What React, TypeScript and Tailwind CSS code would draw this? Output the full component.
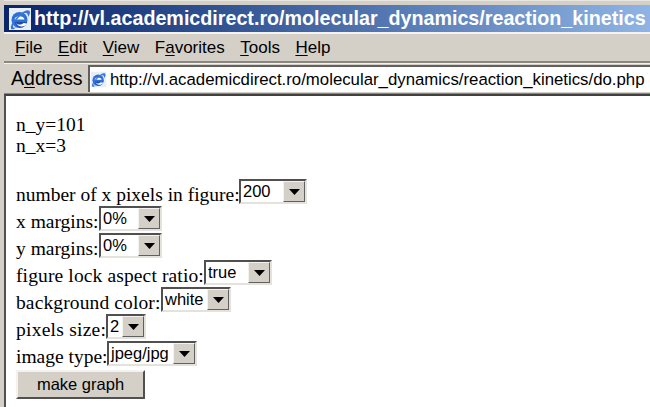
const sans = "font-['Liberation_Sans',Arial,sans-serif]";

function IeIcon({ size, className }: { size: number; className?: string }) {
  return (
    <svg width={size} height={size} viewBox="0 0 24 24" className={className}>
      <rect x="1" y="1" width="22" height="22" fill="#e8eef6" />
      <ellipse cx="11.5" cy="13" rx="8" ry="8" fill="#2f6fd6" />
      <path d="M6.5 12.5 C7 8.5 15.5 8 16.5 12.5 Z" fill="#ffffff" />
      <path d="M7 15 H19 C18 19 14 21 11 20.5 C9 20 7.5 18 7 15 Z" fill="#1c4fb0" />
      <path d="M7.5 15 C8.5 18 13 18.5 15.5 16 L19 16.5 C17 20 10 21.5 7.5 15 Z" fill="#ffffff" />
      <path d="M3 21.5 C1.5 18 9 9 15 5 C19 2.5 22 2.5 22 5.5 C22 7 21 8.5 20 10 C20 7.5 19.5 5.5 17 6 C12 8 5 16 5 19.5 C5 21 7 21 8.5 20 C6 22.5 3.5 23 3 21.5 Z" fill="#3a78d8" />
    </svg>
  );
}

function Select({ value, width }: { value: string; width: string }) {
  return (
    <span className={`inline-flex h-[25px] shrink-0 border-2 border-t-[#505050] border-l-[#505050] border-b-[#e4e2dc] border-r-[#e4e2dc] bg-white ${width}`}>
      <span className={`flex-1 pl-[2px] text-[16.5px] leading-[20px] text-black ${sans}`}>{value}</span>
      <span className="flex h-[21px] w-[22px] shrink-0 items-center justify-center border border-t-[#f4f2ee] border-l-[#f4f2ee] border-b-[#606060] border-r-[#606060] bg-[#d4d0c8]">
        <svg width="11" height="6" viewBox="0 0 11 6"><path d="M0 0H11L5.5 6Z" fill="#000" /></svg>
      </span>
    </span>
  );
}

function Row({ label, labelClass, value, width }: { label: string; labelClass: string; value: string; width: string }) {
  return (
    <div className="flex h-[27px] items-start">
      <span className={`mt-[5px] whitespace-nowrap ${labelClass}`}>{label}</span>
      <Select value={value} width={width} />
    </div>
  );
}

function U({ children }: { children: string }) {
  return <span className="underline underline-offset-2">{children}</span>;
}

export default function App() {
  return (
    <div className={`flex h-[407px] w-[650px] flex-col overflow-hidden bg-[#d4d0c8] pl-[4px] ${sans}`}>
      <div className="h-[5px] shrink-0 border-t border-[#e8e6e0]" />
      <div className="flex h-[27px] shrink-0 items-center overflow-hidden bg-gradient-to-r from-[#0a246a] to-[#8fb4e4] pl-[4px]">
        <IeIcon size={24} className="shrink-0" />
        <span className="ml-[2px] whitespace-nowrap text-[19.7px] font-bold text-white">
          http://vl.academicdirect.ro/molecular_dynamics/reaction_kinetics
        </span>
      </div>
      <div className="flex h-[31px] shrink-0 items-center gap-[15.5px] border-t-2 border-b-2 border-t-[#f4f2ee] border-b-[#8a8880] pl-[11px] pt-[1px] text-[17px] text-black">
        <span><U>F</U>ile</span>
        <span><U>E</U>dit</span>
        <span><U>V</U>iew</span>
        <span>F<U>a</U>vorites</span>
        <span><U>T</U>ools</span>
        <span><U>H</U>elp</span>
      </div>
      <div className="flex h-[31px] shrink-0 items-center border-t border-b border-t-[#f4f2ee] border-b-[#8a8880] text-black">
        <span className="w-[84px] shrink-0 pl-[7px] text-[19.5px] leading-none">A<U>d</U>dress</span>
        <div className="flex h-[27px] flex-1 items-center border-t-2 border-l-2 border-t-[#606060] border-l-[#606060] bg-white">
          <IeIcon size={17} className="shrink-0" />
          <span className="ml-[3px] whitespace-nowrap text-[16.8px]">http://vl.academicdirect.ro/molecular_dynamics/reaction_kinetics/do.php</span>
        </div>
      </div>
      <div className="flex-1 border-t-2 border-l-2 border-t-[#404040] border-l-[#505050] bg-white pl-[10px] pt-[18px] font-['Liberation_Serif','Times_New_Roman',serif] text-[19.5px] leading-[21px] text-black">
        <div>n_y=101</div>
        <div>n_x=3</div>
        <div className="mt-[23px]">
          <Row label="number of x pixels in figure:" labelClass="w-[223px]" value="200" width="w-[68px]" />
          <Row label="x margins:" labelClass="w-[83px]" value="0%" width="w-[63px]" />
          <Row label="y margins:" labelClass="w-[83px]" value="0%" width="w-[63px]" />
          <Row label="figure lock aspect ratio:" labelClass="w-[188px] tracking-[0.13px]" value="true" width="w-[68px]" />
          <Row label="background color:" labelClass="w-[145px] tracking-[0.12px]" value="white" width="w-[70px]" />
          <Row label="pixels size:" labelClass="w-[90px] tracking-[0.25px]" value="2" width="w-[40px]" />
          <Row label="image type:" labelClass="w-[91px]" value="jpeg/jpg" width="w-[90px]" />
        </div>
        <button className={`mt-[2px] block h-[29px] w-[129px] border-2 border-t-[#f4f2ee] border-l-[#f4f2ee] border-b-[#505050] border-r-[#505050] bg-[#d4d0c8] text-[16.5px] text-black ${sans}`}>
          make graph
        </button>
      </div>
    </div>
  );
}
